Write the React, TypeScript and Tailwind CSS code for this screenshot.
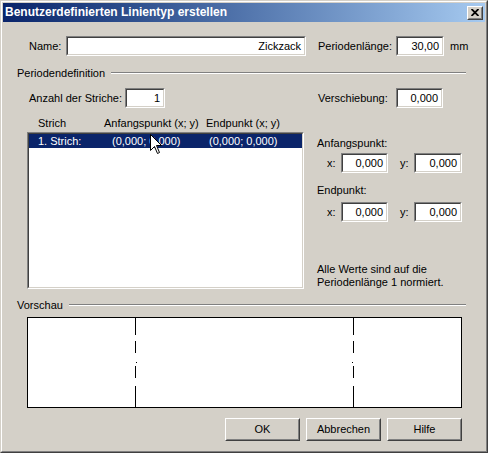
import React from 'react'

function Field({ value, className }: { value: string; className: string }) {
  return (
    <div className={`h-[20px] border border-t-[#808080] border-l-[#808080] border-r-white border-b-white ${className}`}>
      <div className="h-full border border-t-[#404040] border-l-[#404040] border-r-[#d4d0c8] border-b-[#d4d0c8] bg-white flex items-center justify-end pr-[3px]">
        {value}
      </div>
    </div>
  )
}

function Button({ label }: { label: string }) {
  return (
    <div className="w-[75px] h-[23px] border border-t-white border-l-white border-r-[#404040] border-b-[#404040]">
      <div className="h-full border border-t-[#d4d0c8] border-l-[#d4d0c8] border-r-[#808080] border-b-[#808080] flex items-center justify-center">
        {label}
      </div>
    </div>
  )
}

function GroupHeader({ label }: { label: string }) {
  return (
    <div className="flex items-center h-[14px] pl-[14px] pr-[19px]">
      <span>{label}</span>
      <div className="flex-1 ml-[6px] h-[2px] border-t border-t-[#808080] border-b border-b-white" />
    </div>
  )
}

function DashLine({ x, dot }: { x: number; dot: number }) {
  return (
    <g stroke="#000" strokeWidth="1">
      <line x1={x} y1={0} x2={x} y2={17} />
      <line x1={x} y1={23} x2={x} y2={35} />
      <line x1={x + dot} y1={44} x2={x + dot} y2={45} />
      <line x1={x} y1={48} x2={x} y2={60} />
      <line x1={x} y1={68} x2={x} y2={89} />
    </g>
  )
}

function Cursor() {
  return (
    <svg width="13" height="21" viewBox="0 0 13 21" className="absolute left-[149px] top-[133px]">
      <path
        d="M0.5 0.5 L0.5 16.5 L4.5 12.5 L7.5 19.5 L9.5 18.5 L6.5 11.5 L11.5 11.5 Z"
        fill="#fff"
        stroke="#000"
        strokeWidth="1"
      />
    </svg>
  )
}

export default function App() {
  return (
    <div className="relative w-[488px] h-[453px] bg-[#d4d0c8] border border-t-[#d4d0c8] border-l-[#d4d0c8] border-r-[#404040] border-b-[#404040] font-['Liberation_Sans',Arial,sans-serif] text-[11px] text-black leading-[13px]">
      <div className="h-full border border-t-white border-l-white border-r-[#808080] border-b-[#808080] p-px flex flex-col">
        {/* title bar */}
        <div className="h-[19px] flex items-center justify-between bg-linear-to-r from-[#0a246a] to-[#a6caf0] pl-[2px] pr-[2px]">
          <span className="text-white font-bold text-[12px]">Benutzerdefinierten Linientyp erstellen</span>
          <div className="w-[16px] h-[14px] bg-[#d4d0c8] border border-t-white border-l-white border-r-[#404040] border-b-[#404040]">
            <div className="h-full border border-t-[#d4d0c8] border-l-[#d4d0c8] border-r-[#808080] border-b-[#808080] flex items-center justify-center">
              <svg width="8" height="7" viewBox="0 0 8 7">
                <path d="M0.5 0 L7.5 7 M7.5 0 L0.5 7" stroke="#000" strokeWidth="1.8" />
              </svg>
            </div>
          </div>
        </div>

        {/* body */}
        <div className="flex-1 flex flex-col">
          <div className="flex items-center h-[20px] mt-[14px]">
            <span className="ml-[26px] w-[37px]">Name:</span>
            <Field value="Zickzack" className="w-[240px]" />
            <span className="ml-[12px] w-[78px]">Periodenlänge:</span>
            <Field value="30,00" className="w-[48px]" />
            <span className="ml-[6px]">mm</span>
          </div>

          <div className="mt-[10px]">
            <GroupHeader label="Periodendefinition" />
          </div>

          <div className="flex items-center h-[20px] mt-[8px]">
            <span className="ml-[26px] w-[96px]">Anzahl der Striche:</span>
            <Field value="1" className="w-[40px]" />
            <span className="ml-[153px] w-[78px]">Verschiebung:</span>
            <Field value="0,000" className="w-[47px]" />
          </div>

          <div className="flex mt-[8px]">
            <div className="ml-[24px] w-[277px] flex flex-col">
              <div className="h-[14px] flex items-center relative">
                <span className="absolute left-[11px]">Strich</span>
                <span className="absolute left-[77px]">Anfangspunkt (x; y)</span>
                <span className="absolute left-[179px]">Endpunkt (x; y)</span>
              </div>
              <div className="mt-[2px] h-[157px] border border-t-[#808080] border-l-[#808080] border-r-white border-b-white">
                <div className="h-full border border-t-[#404040] border-l-[#404040] border-r-[#d4d0c8] border-b-[#d4d0c8] bg-white">
                  <div className="h-[14px] bg-[#0a246a] text-white flex items-center relative">
                    <span className="absolute left-[9px]">1. Strich:</span>
                    <span className="absolute left-[83px]">(0,000; 0,000)</span>
                    <span className="absolute left-[180px]">(0,000; 0,000)</span>
                  </div>
                </div>
              </div>
            </div>

            <div className="ml-[13px] flex flex-col">
              <span className="mt-[20px] h-[14px] flex items-center">Anfangspunkt:</span>
              <div className="flex items-center h-[20px] mt-[3px]">
                <span className="ml-[10px] w-[14px]">x:</span>
                <Field value="0,000" className="w-[47px]" />
                <span className="ml-[12px] w-[14px]">y:</span>
                <Field value="0,000" className="w-[48px]" />
              </div>
              <span className="mt-[10px] h-[14px] flex items-center">Endpunkt:</span>
              <div className="flex items-center h-[20px] mt-[5px]">
                <span className="ml-[10px] w-[14px]">x:</span>
                <Field value="0,000" className="w-[47px]" />
                <span className="ml-[12px] w-[14px]">y:</span>
                <Field value="0,000" className="w-[48px]" />
              </div>
              <p className="mt-[41px]">
                Alle Werte sind auf die
                <br />
                Periodenlänge 1 normiert.
              </p>
            </div>
          </div>

          <div className="mt-[9px]">
            <GroupHeader label="Vorschau" />
          </div>

          <div className="ml-[24px] mt-[5px] w-[435px] h-[91px] border border-black bg-white">
            <svg width="433" height="89" viewBox="0 0 433 89" className="block">
              <DashLine x={107.5} dot={1} />
              <DashLine x={325.5} dot={-1} />
            </svg>
          </div>

          <div className="flex justify-end gap-[6px] mt-[10px] pr-[23px]">
            <Button label="OK" />
            <Button label="Abbrechen" />
            <Button label="Hilfe" />
          </div>
        </div>
      </div>
      <Cursor />
    </div>
  )
}
